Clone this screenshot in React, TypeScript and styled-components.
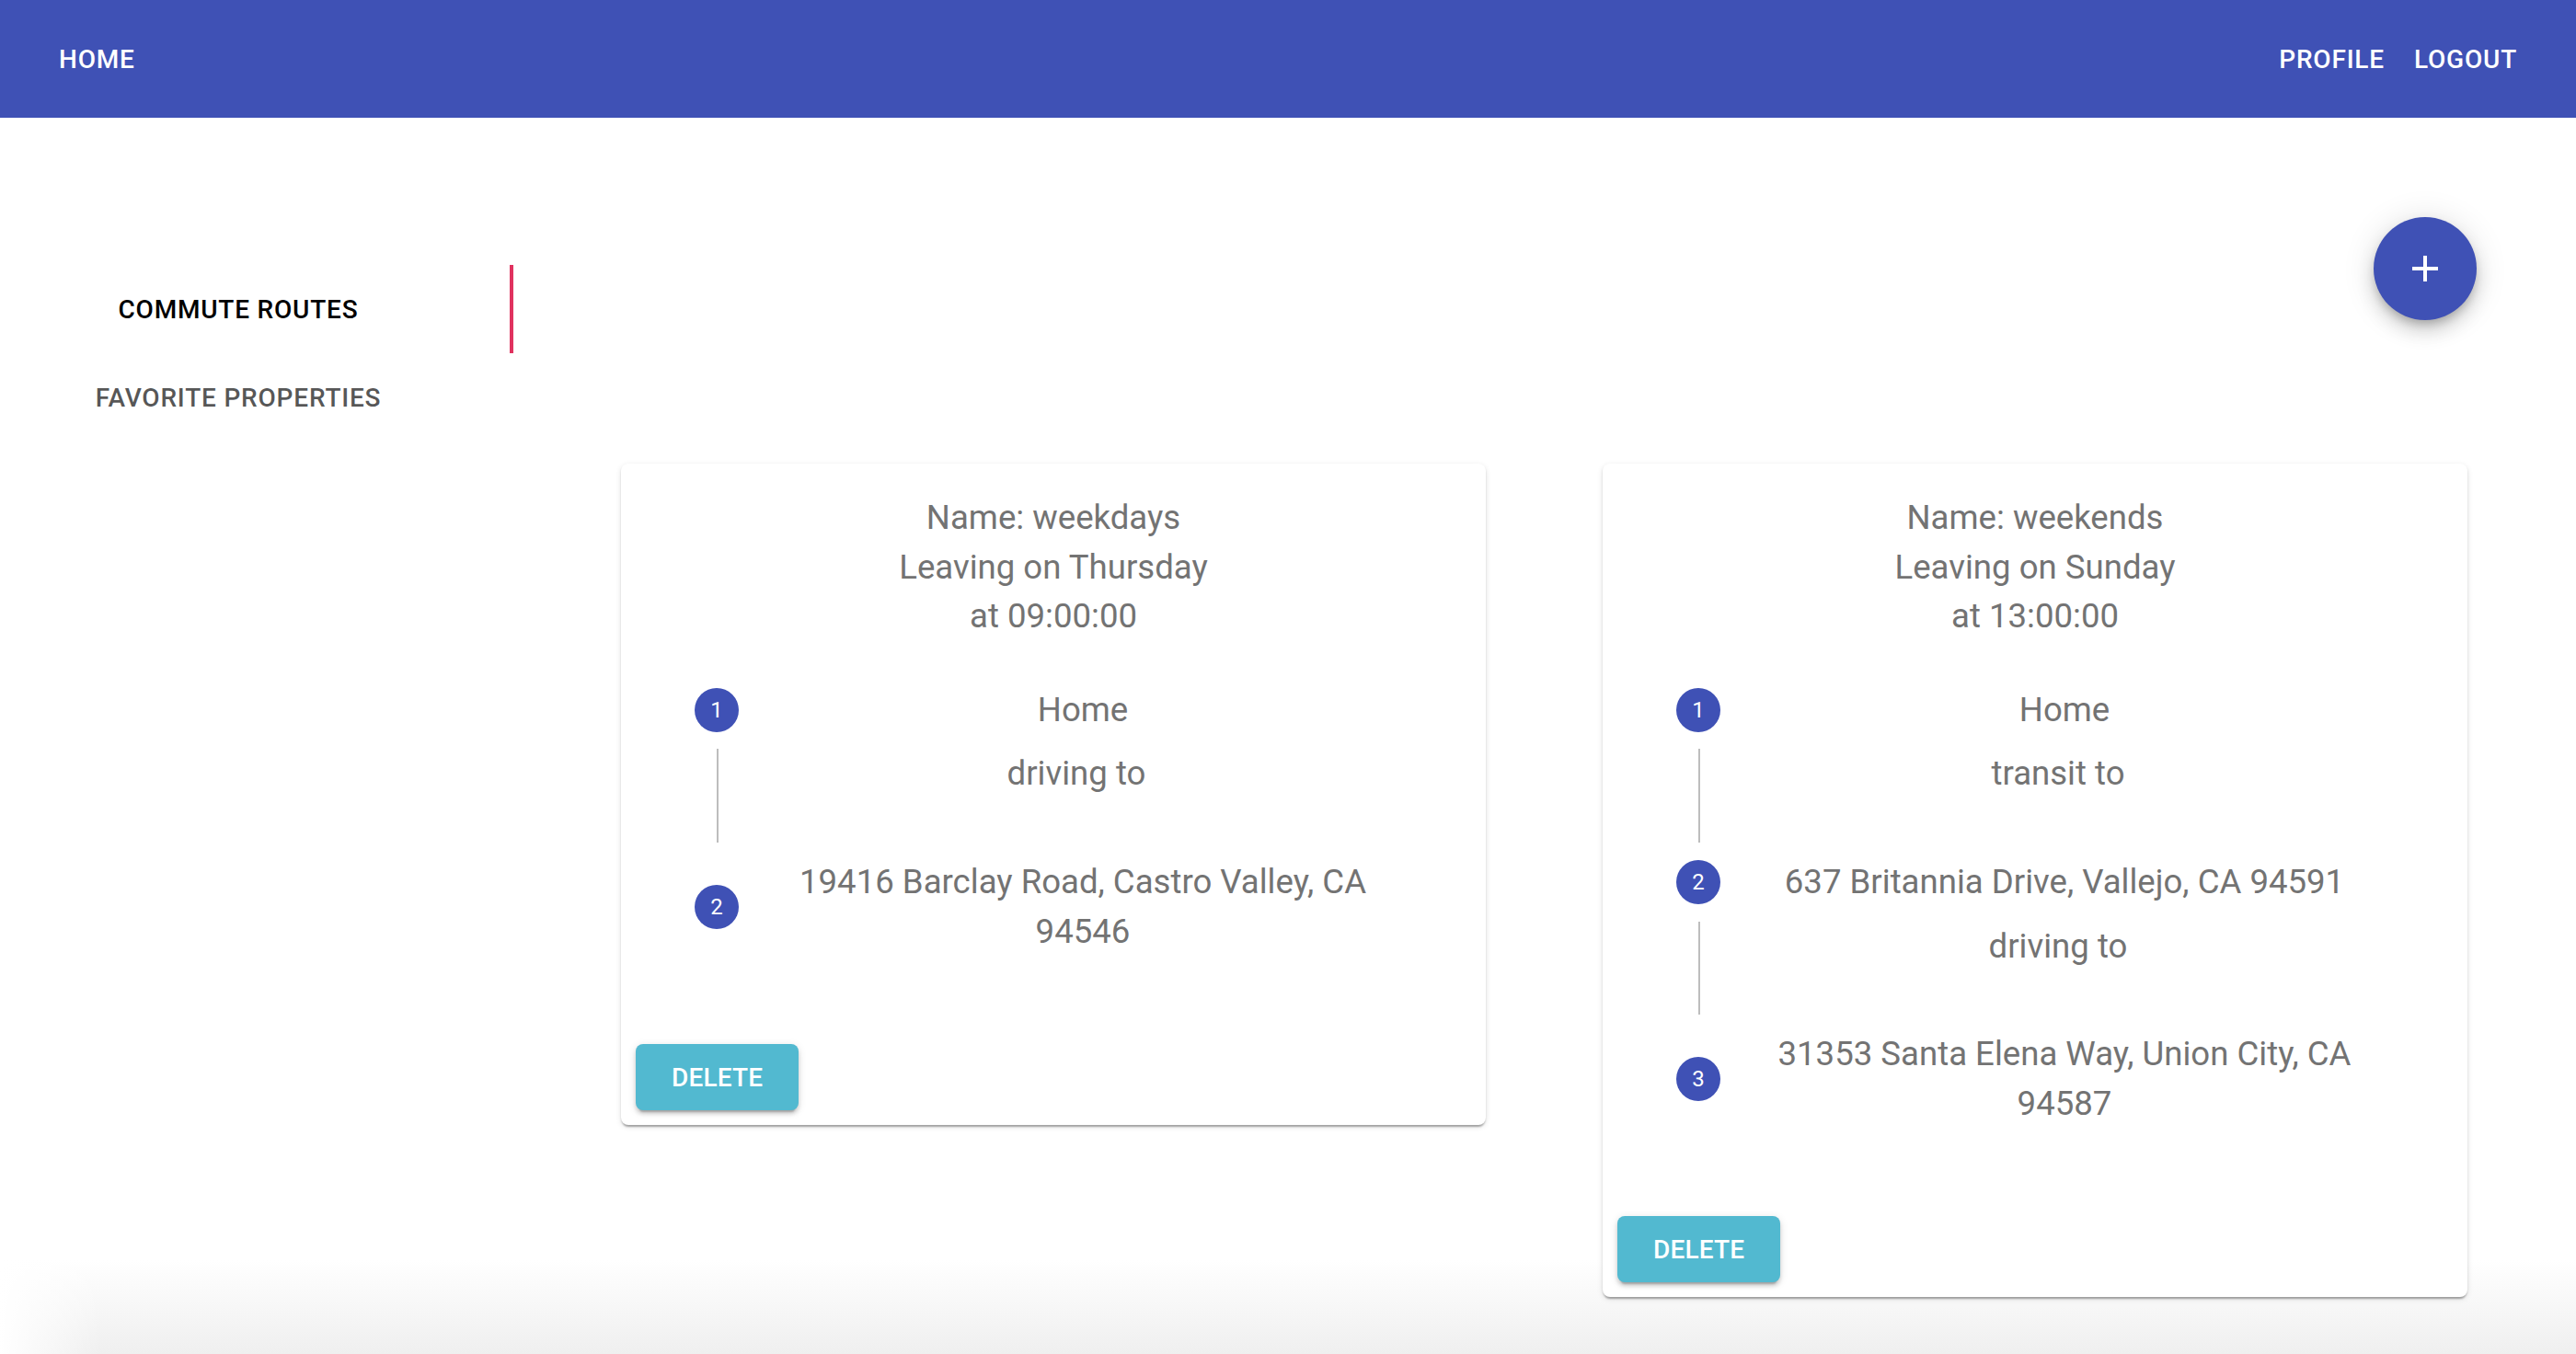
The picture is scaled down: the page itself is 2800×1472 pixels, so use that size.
import React from 'react'
import styled, { createGlobalStyle } from 'styled-components'

const GlobalStyle = createGlobalStyle`
  html, body {
    margin: 0;
    padding: 0;
  }
  body {
    font-family: Roboto, "Liberation Sans", Arial, sans-serif;
  }
  * {
    box-sizing: border-box;
  }
`

const Page = styled.div`
  min-height: 100vh;
  background:
    linear-gradient(to right, #fff, rgba(255, 255, 255, 0)) left bottom / 110px 110px no-repeat,
    linear-gradient(to bottom, #fff 0, #fff 1370px, #efefef 1472px);
`

const AppBar = styled.header`
  height: 128px;
  padding: 0 48px;
  display: flex;
  align-items: center;
  justify-content: space-between;
  background: #3f51b5;
`

const NavGroup = styled.nav`
  display: flex;
  align-items: center;
`

const NavButton = styled.button`
  border: none;
  background: transparent;
  color: #fff;
  font-family: inherit;
  font-size: 28px;
  font-weight: 500;
  letter-spacing: 0.8px;
  line-height: 1.75;
  text-transform: uppercase;
  padding: 12px 16px;
  cursor: pointer;
`

const Main = styled.main`
  display: flex;
  align-items: flex-start;
`

const TabList = styled.div`
  width: 558px;
  margin-top: 160px;
  display: flex;
  flex-direction: column;
  flex-shrink: 0;
`

const TabItem = styled.div<{ $active?: boolean }>`
  height: 96px;
  padding-right: 36px;
  display: flex;
  align-items: center;
  justify-content: center;
  border-right: 4px solid ${p => (p.$active ? '#e0325f' : 'transparent')};
  color: ${p => (p.$active ? '#000' : 'rgba(0, 0, 0, 0.68)')};
  font-size: 28px;
  font-weight: 500;
  letter-spacing: 0.8px;
  text-transform: uppercase;
  cursor: pointer;
`

const Content = styled.section`
  flex: 1;
  display: flex;
  flex-direction: column;
`

const FabRow = styled.div`
  display: flex;
  justify-content: flex-end;
  padding: 108px 108px 0 0;
`

const Fab = styled.button`
  width: 112px;
  height: 112px;
  border-radius: 50%;
  border: none;
  background: #3f51b5;
  display: flex;
  align-items: center;
  justify-content: center;
  box-shadow: 0 6px 10px -2px rgba(0, 0, 0, 0.2), 0 12px 20px 0 rgba(0, 0, 0, 0.14), 0 2px 36px 0 rgba(0, 0, 0, 0.12);
  cursor: pointer;
`

const CardGrid = styled.div`
  margin: 156px 0 0 117px;
  display: grid;
  grid-template-columns: 940px 940px;
  column-gap: 127px;
  align-items: start;
`

const Card = styled.article`
  background: #fff;
  border-radius: 8px;
  box-shadow: 0 4px 2px -2px rgba(0, 0, 0, 0.2), 0 2px 2px 0 rgba(0, 0, 0, 0.14), 0 2px 6px 0 rgba(0, 0, 0, 0.12);
  overflow: hidden;
`

const CardBody = styled.div`
  padding: 32px;
  text-align: center;
  color: #737373;
  font-size: 36.6px;
  line-height: 53.6px;
`

const Heading = styled.div`
  text-align: center;
`

const Stepper = styled.div`
  padding: 48px;
  display: flex;
  flex-direction: column;
`

const StepRow = styled.div`
  display: flex;
  align-items: center;
`

const StepIcon = styled.span`
  width: 48px;
  height: 48px;
  flex-shrink: 0;
  margin-right: 16px;
  border-radius: 50%;
  background: #3f51b5;
  color: #fff;
  font-size: 24px;
  line-height: 48px;
  text-align: center;
`

const StepLabel = styled.div`
  flex: 1;
  text-align: center;
`

const StepContent = styled.div`
  margin: 16px 0 0 24px;
  padding: 0 16px 0 40px;
  border-left: 2px solid #bdbdbd;
  text-align: center;
`

const Connector = styled.div`
  margin-left: 24px;
  padding-bottom: 16px;
`

const ConnectorLine = styled.span`
  display: block;
  min-height: 48px;
  border-left: 2px solid #bdbdbd;
`

const CardActions = styled.div`
  padding: 16px;
  display: flex;
  align-items: center;
`

const DeleteButton = styled.button`
  height: 72px;
  padding: 12px 39px;
  border: none;
  border-radius: 8px;
  background: #52b9d0;
  color: #fff;
  font-family: inherit;
  font-size: 28px;
  font-weight: 500;
  letter-spacing: 0.2px;
  text-transform: uppercase;
  box-shadow: 0 6px 2px -4px rgba(0, 0, 0, 0.2), 0 4px 4px 0 rgba(0, 0, 0, 0.14), 0 2px 10px 0 rgba(0, 0, 0, 0.12);
  cursor: pointer;
`

type Leg = { place: string; mode?: string }

type Route = {
  name: string
  day: string
  time: string
  legs: Leg[]
}

const routes: Route[] = [
  {
    name: 'weekdays',
    day: 'Thursday',
    time: '09:00:00',
    legs: [
      { place: 'Home', mode: 'driving' },
      { place: '19416 Barclay Road, Castro Valley, CA 94546' },
    ],
  },
  {
    name: 'weekends',
    day: 'Sunday',
    time: '13:00:00',
    legs: [
      { place: 'Home', mode: 'transit' },
      { place: '637 Britannia Drive, Vallejo, CA 94591', mode: 'driving' },
      { place: '31353 Santa Elena Way, Union City, CA 94587' },
    ],
  },
]

const AddIcon = () => (
  <svg width="48" height="48" viewBox="0 0 24 24" fill="#fff">
    <path d="M19 13h-6v6h-2v-6H5v-2h6V5h2v6h6v2z" />
  </svg>
)

const RouteCard = ({ route }: { route: Route }) => (
  <Card>
    <CardBody>
      <Heading>
        <div>Name: {route.name}</div>
        <div>Leaving on {route.day}</div>
        <div>at {route.time}</div>
      </Heading>
      <Stepper>
        {route.legs.map((leg, i) => (
          <React.Fragment key={i}>
            <StepRow>
              <StepIcon>{i + 1}</StepIcon>
              <StepLabel>{leg.place}</StepLabel>
            </StepRow>
            {leg.mode && (
              <>
                <StepContent>{leg.mode} to</StepContent>
                <Connector>
                  <ConnectorLine />
                </Connector>
              </>
            )}
          </React.Fragment>
        ))}
      </Stepper>
    </CardBody>
    <CardActions>
      <DeleteButton>Delete</DeleteButton>
    </CardActions>
  </Card>
)

export default function App() {
  return (
    <Page>
      <GlobalStyle />
      <AppBar>
        <NavButton>Home</NavButton>
        <NavGroup>
          <NavButton>Profile</NavButton>
          <NavButton>Logout</NavButton>
        </NavGroup>
      </AppBar>
      <Main>
        <TabList>
          <TabItem $active>Commute Routes</TabItem>
          <TabItem>Favorite Properties</TabItem>
        </TabList>
        <Content>
          <FabRow>
            <Fab aria-label="add">
              <AddIcon />
            </Fab>
          </FabRow>
          <CardGrid>
            {routes.map(r => (
              <RouteCard key={r.name} route={r} />
            ))}
          </CardGrid>
        </Content>
      </Main>
    </Page>
  )
}
